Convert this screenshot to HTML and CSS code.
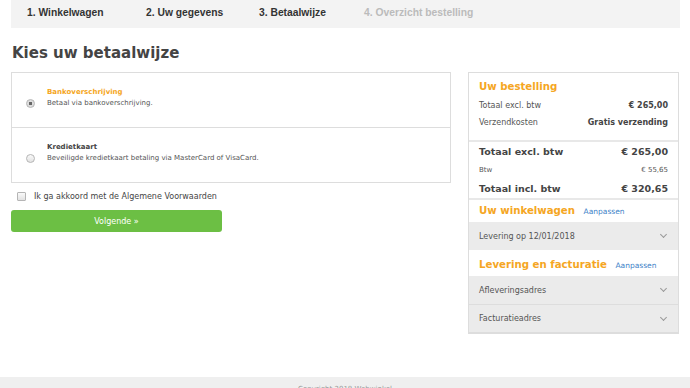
FILE: index.html
```html
<!DOCTYPE html>
<html lang="nl">
<head>
    <meta charset="UTF-8">
    <meta name="viewport" content="width=device-width, initial-scale=1.0">
    <title>Afrekenen - Betaalwijze</title>
    <link rel="stylesheet" href="styles.css">
</head>
<body>
    <div class="page">
        <nav class="steps">
            <span class="step">1. Winkelwagen</span>
            <span class="step">2. Uw gegevens</span>
            <span class="step">3. Betaalwijze</span>
            <span class="step step-todo">4. Overzicht bestelling</span>
        </nav>

        <div class="checkout">
            <div class="main">
                <h1>Kies uw betaalwijze</h1>

                <div class="methods">
                    <label class="method">
                        <input type="radio" name="method" checked>
                        <span class="method-text">
                            <strong class="method-name active">Bankoverschrijving</strong>
                            <span class="method-desc">Betaal via bankoverschrijving.</span>
                        </span>
                    </label>
                    <label class="method">
                        <input type="radio" name="method">
                        <span class="method-text">
                            <strong class="method-name">Kredietkaart</strong>
                            <span class="method-desc">Beveiligde kredietkaart betaling via MasterCard of VisaCard.</span>
                        </span>
                    </label>
                </div>

                <label class="terms">
                    <input type="checkbox">
                    Ik ga akkoord met de Algemene Voorwaarden
                </label>

                <button class="next">Volgende &raquo;</button>
            </div>

            <aside class="summary">
                <div class="block">
                    <h2>Uw bestelling</h2>
                    <div class="line"><span>Totaal excl. btw</span><b>&euro; 265,00</b></div>
                    <div class="line"><span>Verzendkosten</span><b>Gratis verzending</b></div>
                </div>
                <div class="totals">
                    <div class="line big"><span>Totaal excl. btw</span><span>&euro; 265,00</span></div>
                    <div class="line small"><span>Btw</span><span>&euro; 55,65</span></div>
                    <div class="line big"><span>Totaal incl. btw</span><span>&euro; 320,65</span></div>
                </div>

                <h2 class="sub">Uw winkelwagen <a href="#">Aanpassen</a></h2>
                <div class="fold">Levering op 12/01/2018 <span class="chev"></span></div>

                <h2 class="sub">Levering en facturatie <a href="#">Aanpassen</a></h2>
                <div class="fold">Afleveringsadres <span class="chev"></span></div>
                <div class="fold">Facturatieadres <span class="chev"></span></div>
            </aside>
        </div>
    </div>

    <footer>Copyright 2018 Webwinkel</footer>
</body>
</html>
```

FILE: styles.css
```css
body {
    margin: 0;
    font-family: "DejaVu Sans", Verdana, sans-serif;
    color: #555;
    background: #fff;
}
.page {
    padding: 0 10px 0 11px;
    height: 377px;
}
.steps {
    display: grid;
    grid-template-columns: 119px 113px 105px auto;
    align-items: center;
    height: 24px;
    padding: 0 0 4px 16px;
    background: #f3f3f3;
    font-family: "Liberation Sans", Arial, sans-serif;
    font-weight: bold;
    font-size: 10.3px;
    color: #333;
}
.step-todo {
    color: #bbb;
}
.checkout {
    display: flex;
    gap: 17px;
    align-items: flex-start;
}
.main {
    width: 440px;
}
h1 {
    margin: 15px 0 9px 1px;
    font-size: 15px;
    line-height: 20px;
    color: #444;
}
.methods {
    border: 1px solid #ddd;
}
.method {
    display: flex;
    align-items: flex-start;
    height: 39px;
    padding: 15px 0 0 14px;
}
.method + .method {
    border-top: 1px solid #ddd;
}
.method input,
.terms input {
    appearance: none;
    box-sizing: border-box;
    width: 9px;
    height: 9px;
    margin: 0;
    border: 1px solid #b5b5b5;
    background: linear-gradient(#fafafa, #e2e2e2);
}
.method input {
    margin: 11px 12px 0 0;
    border-radius: 50%;
}
.method input:checked {
    background: radial-gradient(circle, #666 0 1.5px, #ddd 2px);
}
.method-text {
    display: flex;
    flex-direction: column;
    gap: 2px;
    font-size: 7px;
    line-height: 9px;
}
.method-name {
    color: #444;
}
.method-name.active {
    color: #f5a623;
}
.terms {
    display: flex;
    align-items: center;
    margin: 9px 0 0 6px;
    font-size: 8px;
    color: #444;
}
.terms input {
    margin-right: 8px;
    border-radius: 1px;
}
.next {
    display: block;
    width: 211px;
    height: 22px;
    margin-top: 9px;
    border: none;
    border-radius: 3px;
    background: #6cbf44;
    color: #fff;
    font-family: "DejaVu Sans", Verdana, sans-serif;
    font-size: 8px;
    cursor: pointer;
}
.summary {
    width: 209px;
    margin-top: 44px;
    border: 1px solid #ddd;
    border-bottom-width: 2px;
}
.block {
    padding: 6px 10px 9px;
    border-bottom: 2px solid #e8e8e8;
}
h2 {
    margin: 0 0 2px;
    font-size: 10.2px;
    line-height: 16px;
    color: #f5a623;
}
.line {
    display: flex;
    justify-content: space-between;
    font-size: 8px;
    line-height: 17px;
}
.line b {
    color: #444;
}
.totals {
    padding: 1px 10px 0;
    border-bottom: 2px solid #e8e8e8;
}
.line.big {
    font-size: 9.5px;
    line-height: 18px;
    font-weight: bold;
    color: #444;
}
.line.small {
    font-size: 7px;
    line-height: 19px;
}
.sub {
    margin: 0;
    padding: 0 10px;
    line-height: 21px;
}
.sub + .fold + .sub {
    padding-top: 4px;
}
.sub a {
    margin-left: 5px;
    font-size: 7.5px;
    font-weight: normal;
    color: #3d82c8;
    text-decoration: none;
}
.fold {
    display: flex;
    justify-content: space-between;
    align-items: center;
    height: 28px;
    padding: 0 10px;
    background: #ebebeb;
    font-size: 8px;
}
.fold + .fold {
    height: 27px;
    border-top: 1px solid #ddd;
}
.chev {
    width: 4px;
    height: 4px;
    margin: -3px 2px 0 0;
    border-right: 1px solid #999;
    border-bottom: 1px solid #999;
    transform: rotate(45deg);
}
footer {
    height: 20px;
    padding-top: 8px;
    background: #efefef;
    text-align: center;
    font-size: 7px;
    color: #999;
}
```
